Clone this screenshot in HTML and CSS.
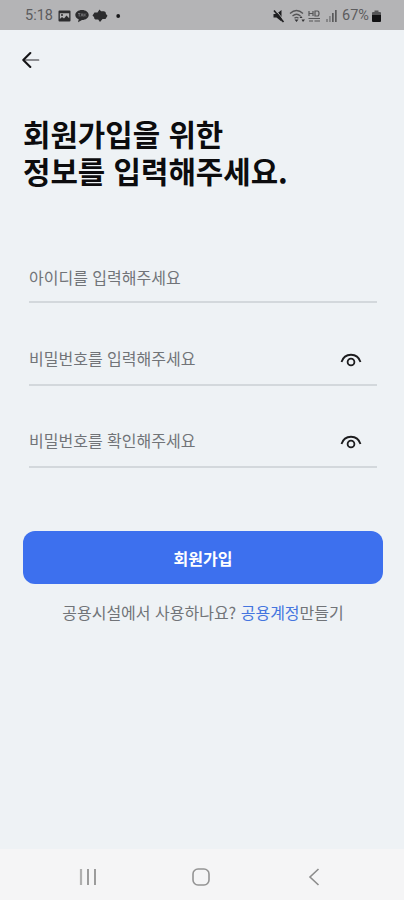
FILE: index.html
```html
<!DOCTYPE html>
<html lang="ko">
<head>
<meta charset="utf-8">
<meta name="viewport" content="width=device-width, initial-scale=1">
<title>회원가입</title>
<link rel="stylesheet" href="styles.css">
</head>
<body>
<div class="screen">
  <header class="status">
    <span class="time">5:18</span>
    <svg class="status-left" width="66" height="16" viewBox="0 0 66 16">
      <path fill="#2c2c2e" fill-rule="evenodd" d="M1.500 2.500h10q1 0 1 1v9q0 1-1 1h-10q-1 0-1-1v-9q0-1 1-1ZM1.800 5.200h9.400v5L8.500 7.500l-2.500 3-2-1.500-2.200 2Z"/>
      <circle cx="4" cy="7" r="1" fill="#2c2c2e"/>
      <path fill="#2c2c2e" d="M24 2c3.800 0 6.700 2.200 6.700 5s-2.900 5-6.700 5l-4 2.300.7-3C18.500 10.400 17.300 8.900 17.300 7c0-2.800 2.900-5 6.700-5Z"/>
      <path stroke="#77777a" stroke-width=".9" fill="none" d="M20 5.500h2.400M21.200 5.500v3M23 8.500l1-3 1 3M26 5.500v3M28 5.500l-1.500 1.500L28 8.500"/>
      <path fill="#2c2c2e" d="M41.500 1.500 43 3.300h3q2 .2 2 2.700l1.500 1.800-2 3.200h-3l-2.500 3-1.800-2.500H37.500q-1.500-.5-1.500-2.500L34.500 7.500l2-3h3Z"/>
      <circle cx="60.200" cy="8" r="1.900" fill="#18181a"/>
    </svg>
    <svg class="status-right" width="66" height="16" viewBox="0 0 66 16">
      <path fill="#1f1f21" d="M1.500 6h3l5-4v11.500l-5-4h-3Z"/>
      <path stroke="#b4b4b6" stroke-width="1" d="m3.400 1.800 9 11"/>
      <path stroke="#1f1f21" stroke-width="1.600" d="m2 2.500 9.500 11.500"/>
      <g fill="none" stroke="#555557" stroke-width="1.300">
        <path d="M18 5.500q6.500-6 13 0M20.500 8q4-3.500 8 0M22.500 10.300q2-1.800 4 0"/>
      </g>
      <path fill="#343436" d="m24.500 14-2-2.500h4ZM27.500 10l1.500-2 1.500 2ZM29.500 11.500l1.500 2.500 2-2.500Z"/>
      <path fill="none" stroke="#555557" stroke-width="1.200" d="M37 3v5M41 3v5M37 5.500h4M43 3h2.500q1.500 0 1.500 2.500T45.500 8H43ZM36.500 10.500h11.500M37 13h4M42.500 13H48"/>
      <path fill="#858587" d="M54 11h2v3h-2ZM57 8h1.800v6h-1.800Z"/>
      <path fill="#5a5a5c" d="M60 5h1.700v9H60ZM63 2h1.700v12H63Z"/>
    </svg>
    <span class="percent">67%</span>
    <svg class="battery" width="9" height="13" viewBox="0 0 9 13">
      <path fill="#555557" d="M2.500 1.500h4v1.500H8q1 0 1 1V6H0V4q0-1 1-1h1.500Z"/>
      <path fill="#111113" d="M0 6h9v6q0 1-1 1H1q-1 0-1-1Z"/>
    </svg>
  </header>

  <main class="content">
    <button class="back" type="button" aria-label="뒤로">
      <svg width="18" height="18" viewBox="0 0 18 18" fill="none" stroke-linecap="round" stroke-linejoin="round">
        <path stroke="#6c6c70" stroke-width="1.700" d="M2 9h14.500"/>
        <path stroke="#141416" stroke-width="2.100" d="M8.300 2 1.300 9l7 7"/>
      </svg>
    </button>
    <h1 class="title">회원가입을 위한<br>정보를 입력해주세요.</h1>

    <form class="form">
      <div class="field"><span class="hint">아이디를 입력해주세요</span></div>
      <div class="field field-secret">
        <span class="hint">비밀번호를 입력해주세요</span>
        <svg class="eye" width="22" height="16" viewBox="0 0 22 16" fill="none" stroke="#1c1c1e" stroke-width="1.800">
          <path d="M1.500 10C4.500 .3 17.500 .3 20.500 10"/><circle cx="11" cy="10" r="3.400"/>
        </svg>
      </div>
      <div class="field field-secret">
        <span class="hint">비밀번호를 확인해주세요</span>
        <svg class="eye" width="22" height="16" viewBox="0 0 22 16" fill="none" stroke="#1c1c1e" stroke-width="1.800">
          <path d="M1.500 10C4.500 .3 17.500 .3 20.500 10"/><circle cx="11" cy="10" r="3.400"/>
        </svg>
      </div>
      <button class="submit" type="button">회원가입</button>
    </form>
    <p class="shared">공용시설에서 사용하나요? <span class="link">공용계정</span>만들기</p>
  </main>

  <nav class="navbar">
    <svg width="18" height="18" viewBox="0 0 18 18" fill="none" stroke-width="1.700"><path stroke="#b0b0b0" stroke-width="2.200" d="M2 1v16"/><path stroke="#8c8c8c" d="M9 1v16M16 1v16"/></svg>
    <svg width="18" height="18" viewBox="0 0 18 18" fill="none" stroke="#949494" stroke-width="1.600"><rect x="1" y="1" width="16" height="16" rx="5"/></svg>
    <svg width="18" height="18" viewBox="0 0 18 18" fill="none" stroke="#8c8c8c" stroke-width="1.600"><path d="M13.500 1 5 9l8.500 8"/></svg>
  </nav>
</div>
</body>
</html>
```
FILE: styles.css
```css
* { box-sizing: border-box; }

body {
  margin: 0;
  font-family: "Noto Sans CJK KR", "Noto Sans", sans-serif;
}

.screen {
  display: flex;
  flex-direction: column;
  height: 900px;
  background: #eef2f5;
}

.status {
  display: flex;
  align-items: center;
  height: 30px;
  padding: 1px 23px 0 25px;
  background: #b4b4b6;
  color: #5c5c5e;
  font: 14.5px/16px Roboto, sans-serif;
}

.time { width: 33px; }
.status-right { margin-left: auto; }
.percent { width: 29px; margin-left: 4px; }
.battery { margin-left: 1px; }

.content { flex: 1; padding: 21px 21px 0 23px; }

.back {
  display: block;
  padding: 0;
  border: 0;
  background: none;
  height: 18px;
  margin-left: -1px;
}

.back svg { display: block; }

.title {
  margin: 46px 0 0;
  color: #0c0c0e;
  font-size: 29.8px;
  font-weight: 700;
  line-height: 37px;
}

.form { padding-top: 64px; }

.field {
  display: flex;
  align-items: center;
  justify-content: space-between;
  height: 50px;
  margin: 0 6px 32.500px;
  padding: 0 15px 1px 0;
  border-bottom: 2px solid #d3d8dc;
}

.field-secret { padding-bottom: 4px; }

.hint { color: #717478; font-size: 16px; line-height: 24px; }
.eye { margin-top: 4px; }

.submit {
  display: block;
  width: 100%;
  height: 53px;
  margin-top: 63px;
  padding: 0;
  border: 0;
  border-radius: 12px;
  background: #3d70ee;
  color: #fff;
  font: 700 16px/24px "Noto Sans CJK KR", sans-serif;
}

.shared {
  margin: 16px 0 0;
  color: #717478;
  font-size: 16px;
  line-height: 24px;
  text-align: center;
  white-space: nowrap;
}

.link { color: #4475df; }

.navbar {
  display: flex;
  justify-content: space-between;
  height: 51px;
  padding: 19px 81px 0 79px;
  background: #f5f5f6;
}
```
